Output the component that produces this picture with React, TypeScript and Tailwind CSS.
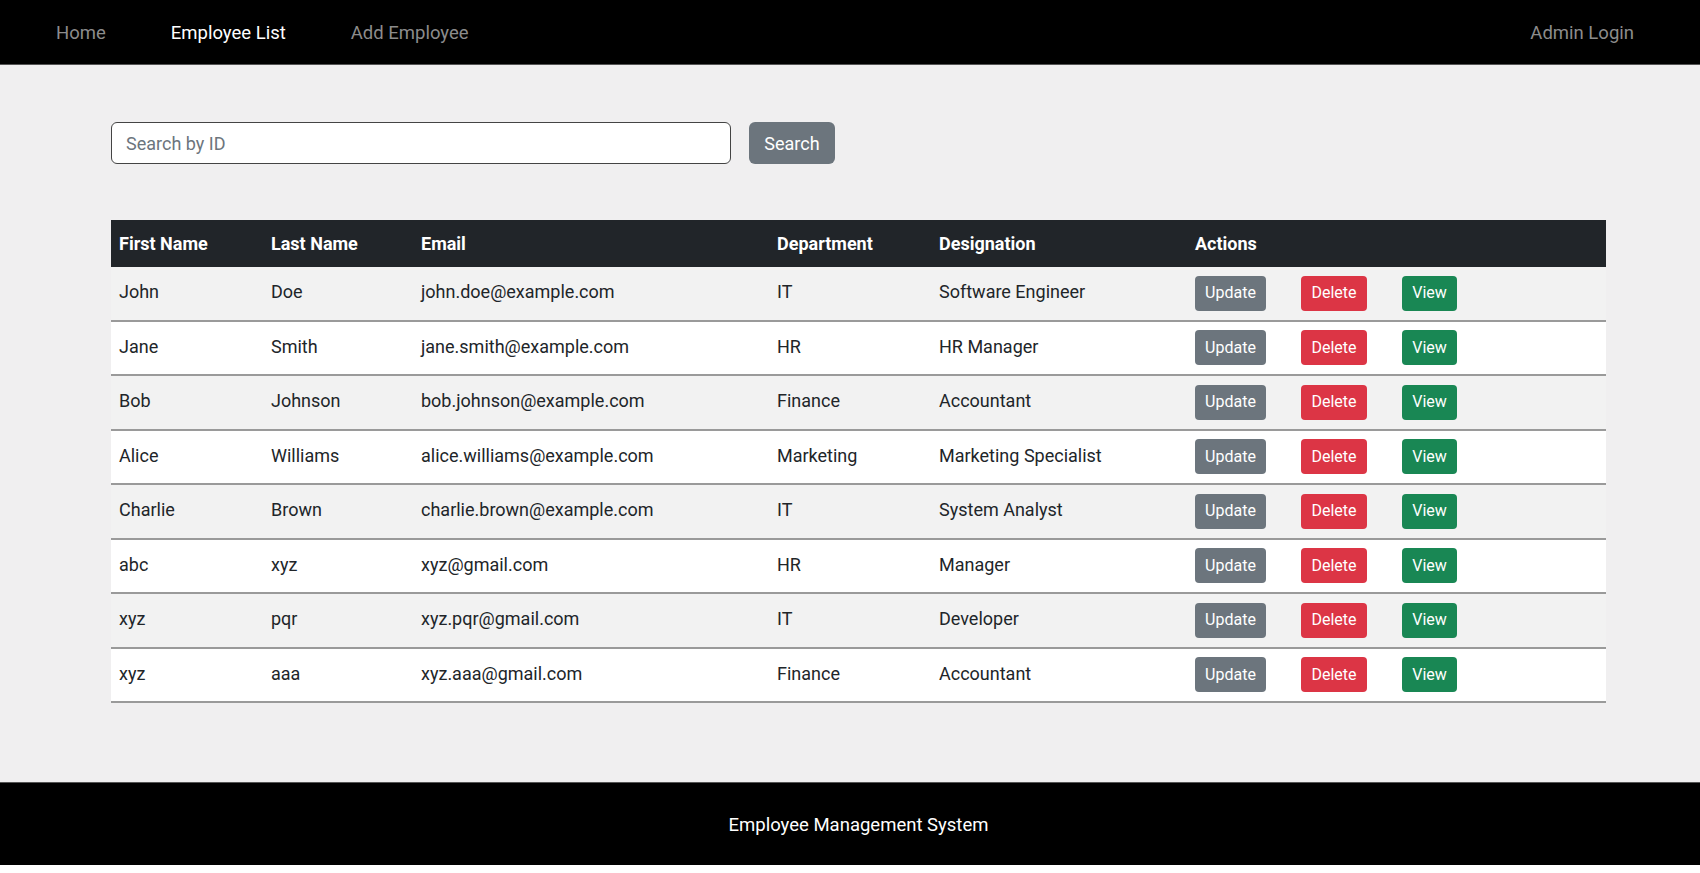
import { useState } from "react";

type Employee = {
  firstName: string;
  lastName: string;
  email: string;
  department: string;
  designation: string;
};

const employees: Employee[] = [
  { firstName: "John", lastName: "Doe", email: "john.doe@example.com", department: "IT", designation: "Software Engineer" },
  { firstName: "Jane", lastName: "Smith", email: "jane.smith@example.com", department: "HR", designation: "HR Manager" },
  { firstName: "Bob", lastName: "Johnson", email: "bob.johnson@example.com", department: "Finance", designation: "Accountant" },
  { firstName: "Alice", lastName: "Williams", email: "alice.williams@example.com", department: "Marketing", designation: "Marketing Specialist" },
  { firstName: "Charlie", lastName: "Brown", email: "charlie.brown@example.com", department: "IT", designation: "System Analyst" },
  { firstName: "abc", lastName: "xyz", email: "xyz@gmail.com", department: "HR", designation: "Manager" },
  { firstName: "xyz", lastName: "pqr", email: "xyz.pqr@gmail.com", department: "IT", designation: "Developer" },
  { firstName: "xyz", lastName: "aaa", email: "xyz.aaa@gmail.com", department: "Finance", designation: "Accountant" },
];

function Navbar() {
  return (
    <nav className="h-[65px] bg-black border-b border-[#555] flex items-center justify-between pt-[4px] pl-[56px] pr-[66px] text-[18.5px]">
      <div className="flex items-center gap-[65px]">
        <a className="text-[#8c8c8c]">Home</a>
        <a className="text-white">Employee List</a>
        <a className="text-[#8c8c8c]">Add Employee</a>
      </div>
      <a className="text-[#8c8c8c]">Admin Login</a>
    </nav>
  );
}

export default function App() {
  const [query, setQuery] = useState("");

  return (
    <div className="bg-[#f0eff0] text-[#212529] font-['Roboto','Liberation_Sans',sans-serif]">
      <Navbar />

      <main className="pt-[57px] pb-[79px] pl-[111px] pr-[94px]">
        {/* Search */}
        <div className="flex items-center gap-[18px]">
          <input
            value={query}
            onChange={(e) => setQuery(e.target.value)}
            placeholder="Search by ID"
            className="w-[620px] h-[42px] bg-white border border-[#444] rounded-[6px] px-[14px] text-[18px] placeholder:text-[#6c757d] outline-none"
          />
          <button className="h-[42px] w-[86px] bg-[#6c757d] text-white text-[18px] rounded-[6px]">
            Search
          </button>
        </div>

        {/* Table */}
        <table className="mt-[56px] w-full border-collapse text-[18px]">
          <thead>
            <tr className="bg-[#212529] text-white h-[47px]">
              <th className="w-[152px] text-left font-bold px-[8px]">First Name</th>
              <th className="w-[150px] text-left font-bold px-[8px]">Last Name</th>
              <th className="w-[356px] text-left font-bold px-[8px]">Email</th>
              <th className="w-[162px] text-left font-bold px-[8px]">Department</th>
              <th className="w-[256px] text-left font-bold px-[8px]">Designation</th>
              <th className="text-left font-bold px-[8px]">Actions</th>
            </tr>
          </thead>
          <tbody>
            {employees.map((emp, i) => (
              <tr
                key={i}
                className={`border-b-2 border-[#9a9a9a] ${i % 2 === 0 ? "bg-[#f2f2f2]" : "bg-white"}`}
              >
                <td className="px-[8px] pt-[11px] align-top">{emp.firstName}</td>
                <td className="px-[8px] pt-[11px] align-top">{emp.lastName}</td>
                <td className="px-[8px] pt-[11px] align-top">{emp.email}</td>
                <td className="px-[8px] pt-[11px] align-top">{emp.department}</td>
                <td className="px-[8px] pt-[11px] align-top">{emp.designation}</td>
                <td className="px-[8px] py-[8.75px]">
                  <div className="flex items-center gap-[35px]">
                    <button className="h-[35px] w-[71px] bg-[#6c757d] text-white text-[16px] rounded-[4px]">Update</button>
                    <button className="h-[35px] w-[66px] bg-[#dc3545] text-white text-[16px] rounded-[4px]">Delete</button>
                    <button className="h-[35px] w-[55px] bg-[#198754] text-white text-[16px] rounded-[4px]">View</button>
                  </div>
                </td>
              </tr>
            ))}
          </tbody>
        </table>
      </main>

      <footer className="h-[83px] bg-black border-t border-[#555] flex items-center justify-center pt-[4px] pl-[17px] text-white text-[18.5px]">
        Employee Management System
      </footer>
    </div>
  );
}
